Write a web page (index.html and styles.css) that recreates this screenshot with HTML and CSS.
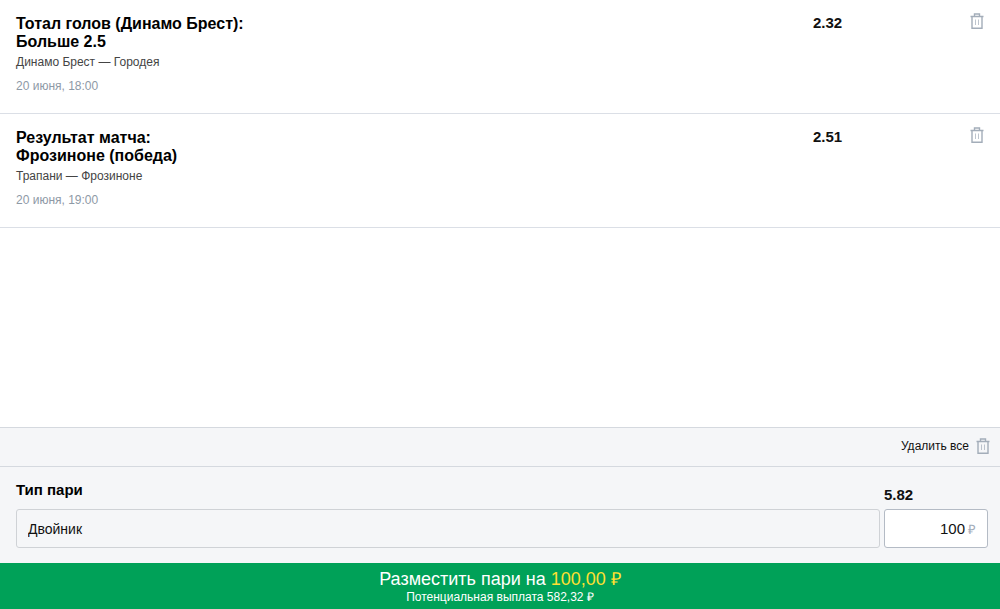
FILE: index.html
```html
<!DOCTYPE html>
<html lang="ru">
<head>
  <meta charset="UTF-8" />
  <meta name="viewport" content="width=device-width, initial-scale=1" />
  <title>Купон</title>
  <link rel="stylesheet" href="styles.css">
</head>
<body>
  <!-- Shared trash icon -->
  <svg class="icon-defs" width="0" height="0" aria-hidden="true">
    <symbol id="trash" viewBox="0 0 14 16">
      <path d="M0.5 3.5H13.5M4.5 3.5V1H9.5V3.5M2 3.5V15.2H12V3.5" fill="none" stroke="currentColor" stroke-width="1.4" />
      <path d="M5.5 6.5V12M8.5 6.5V12" fill="none" stroke="currentColor" stroke-width="1" opacity="0.7" />
    </symbol>
  </svg>

  <form class="coupon">
    <main class="bets">
      <article class="bet">
        <div class="bet-info">
          <h2 class="bet-title">Тотал голов (Динамо Брест):<br>Больше 2.5</h2>
          <div class="bet-match">Динамо Брест — Городея</div>
          <div class="bet-date">20 июня, 18:00</div>
        </div>
        <div class="bet-odds">2.32</div>
        <button class="btn-remove" type="button" aria-label="Удалить">
          <svg class="icon"><use href="#trash" /></svg>
        </button>
      </article>
      <article class="bet">
        <div class="bet-info">
          <h2 class="bet-title">Результат матча:<br>Фрозиноне (победа)</h2>
          <div class="bet-match">Трапани — Фрозиноне</div>
          <div class="bet-date">20 июня, 19:00</div>
        </div>
        <div class="bet-odds">2.51</div>
        <button class="btn-remove" type="button" aria-label="Удалить">
          <svg class="icon"><use href="#trash" /></svg>
        </button>
      </article>
    </main>

    <div class="toolbar">
      <button class="btn-clear" type="button">
        Удалить все
        <svg class="icon"><use href="#trash" /></svg>
      </button>
    </div>

    <div class="stake">
      <div class="type-field">
        <label class="type-label" for="betType">Тип пари</label>
        <select class="type-select" id="betType">
          <option>Двойник</option>
        </select>
      </div>
      <div class="sum-field">
        <label class="sum-label" for="betSum">5.82</label>
        <div class="sum-box">
          <input class="sum-input" id="betSum" type="text" inputmode="numeric" value="100" />
          <span class="sum-currency">₽</span>
        </div>
      </div>
    </div>

    <button class="btn-submit" type="submit">
      <span class="submit-title">Разместить пари на <span class="submit-sum">100,00 ₽</span></span>
      <span class="submit-payout">Потенциальная выплата 582,32 ₽</span>
    </button>
  </form>
</body>
</html>
```
FILE: styles.css
```css
* {
  box-sizing: border-box;
}
body {
  margin: 0;
  font-family: "Liberation Sans", Arial, sans-serif;
  color: #111;
  background-color: #fff;
}
button,
input,
select {
  font-family: inherit;
  color: inherit;
}
button {
  padding: 0;
  border: none;
  background: none;
  cursor: pointer;
}
.icon-defs {
  display: block;
}
.icon {
  display: block;
  width: 14px;
  height: 16px;
  color: #a3adb9;
}
.coupon {
  display: flex;
  flex-direction: column;
  min-height: 100vh;
}

/* Bets */
.bets {
  flex: 1;
}
.bet {
  display: flex;
  align-items: flex-start;
  padding: 13px 16px 19px;
  border-bottom: 1px solid #dbdfe6;
}
.bet-info {
  flex: 1;
  padding-top: 2px;
}
.bet-title {
  margin: 0;
  font-size: 16px;
  line-height: 18px;
  color: #000;
}
.bet-match {
  margin-top: 3px;
  font-size: 12px;
  line-height: 16px;
  color: #444;
}
.bet-date {
  margin-top: 8px;
  font-size: 12px;
  line-height: 16px;
  color: #8e99a6;
}
.bet-odds {
  width: 157px;
  padding-top: 1px;
  font-size: 15px;
  font-weight: bold;
  line-height: 18px;
}

/* Summary */
.toolbar {
  display: flex;
  justify-content: flex-end;
  padding: 9px 10px 11px;
  border-top: 1px solid #d5d9df;
  border-bottom: 1px solid #d5d9df;
  background-color: #f5f6f8;
}
.btn-clear {
  display: flex;
  align-items: center;
  gap: 7px;
  font-size: 12px;
  line-height: 18px;
}
.stake {
  display: flex;
  align-items: flex-end;
  gap: 4px;
  padding: 14px 12px 15px 16px;
  background-color: #f5f6f8;
}
.type-field {
  flex: 1;
}
.type-label,
.sum-label {
  display: block;
  font-size: 15px;
  font-weight: bold;
  line-height: 18px;
}
.type-label {
  margin-bottom: 10px;
  color: #000;
}
.sum-label {
  margin-bottom: 5px;
}
.type-select {
  display: block;
  width: 100%;
  height: 39px;
  padding: 0 11px;
  border: 1px solid #cfd2d6;
  border-radius: 3px;
  font-size: 14px;
  background-color: #f5f6f8;
  appearance: none;
}
.sum-field {
  width: 104px;
}
.sum-box {
  display: flex;
  align-items: center;
  gap: 3px;
  height: 39px;
  padding: 0 11px;
  border: 1px solid #b4bbc5;
  border-radius: 3px;
  background-color: #fff;
}
.sum-input {
  flex: 1;
  min-width: 0;
  padding: 0;
  border: none;
  outline: none;
  font-size: 15px;
  text-align: right;
  background: none;
}
.sum-currency {
  font-size: 13px;
  color: #a3adb9;
}

/* Submit */
.btn-submit {
  display: flex;
  flex-direction: column;
  align-items: center;
  padding: 6px 0 5px;
  color: #fff;
  background-color: #00a158;
}
.submit-title {
  font-size: 18px;
  line-height: 21px;
}
.submit-sum {
  color: #ffe032;
}
.submit-payout {
  font-size: 12px;
  line-height: 14px;
}
```
